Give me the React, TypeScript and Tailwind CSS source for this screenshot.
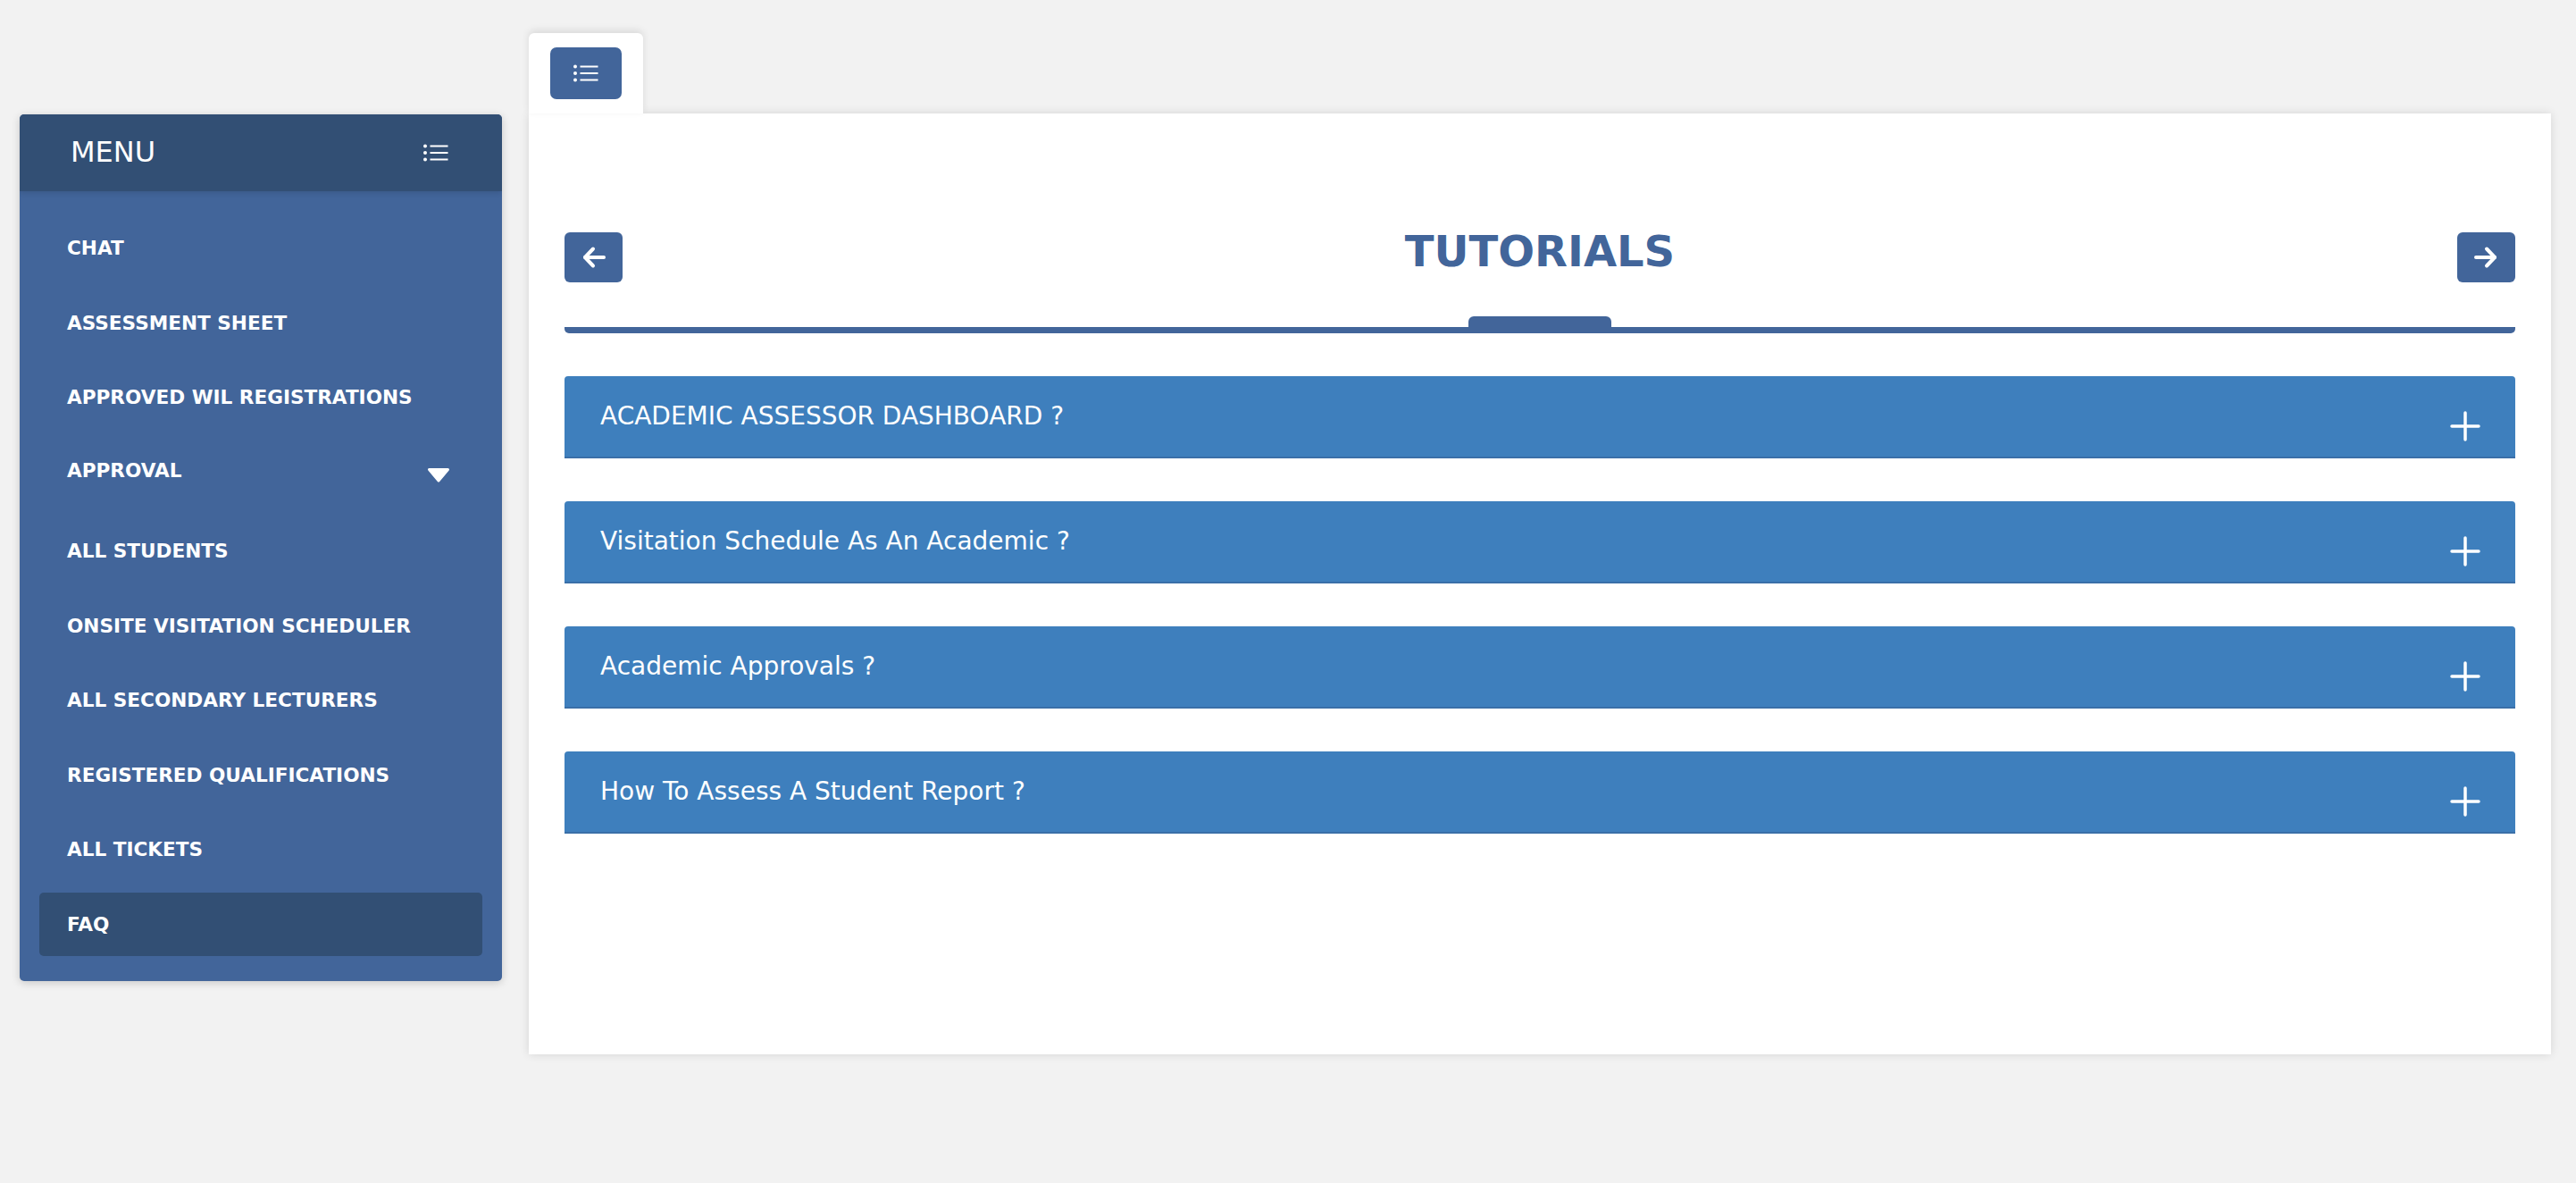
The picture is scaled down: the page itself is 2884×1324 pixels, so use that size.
import React from "react";

const ListIcon = ({ className = "" }: { className?: string }) => (
  <svg className={className} width="28" height="20" viewBox="0 0 28 20" fill="none">
    <circle cx="2" cy="2.5" r="2" fill="white" />
    <circle cx="2" cy="10" r="2" fill="white" />
    <circle cx="2" cy="17.5" r="2" fill="white" />
    <rect x="7.5" y="1.5" width="20" height="2" fill="white" />
    <rect x="7.5" y="9" width="20" height="2" fill="white" />
    <rect x="7.5" y="16.5" width="20" height="2" fill="white" />
  </svg>
);

const ArrowLeft = () => (
  <svg width="28" height="28" viewBox="0 0 28 28" fill="none" stroke="white" strokeWidth="4" strokeLinecap="round" strokeLinejoin="round">
    <line x1="4" y1="14" x2="25" y2="14" />
    <polyline points="13,4.5 4,14 13,23.5" />
  </svg>
);

const ArrowRight = () => (
  <svg width="28" height="28" viewBox="0 0 28 28" fill="none" stroke="white" strokeWidth="4" strokeLinecap="round" strokeLinejoin="round">
    <line x1="3" y1="14" x2="24" y2="14" />
    <polyline points="15,4.5 24,14 15,23.5" />
  </svg>
);

const Plus = () => (
  <svg width="34" height="34" viewBox="0 0 34 34" fill="none" stroke="white" strokeWidth="3.5" strokeLinecap="round">
    <line x1="17" y1="2" x2="17" y2="32" />
    <line x1="2" y1="17" x2="32" y2="17" />
  </svg>
);

const Caret = () => (
  <svg width="26" height="18" viewBox="0 0 26 18" fill="white" stroke="white" strokeWidth="3" strokeLinejoin="round">
    <polygon points="2.5,2.5 23.5,2.5 13,15" />
  </svg>
);

const menu = [
  "CHAT",
  "ASSESSMENT SHEET",
  "APPROVED WIL REGISTRATIONS",
  "APPROVAL",
  "ALL STUDENTS",
  "ONSITE VISITATION SCHEDULER",
  "ALL SECONDARY LECTURERS",
  "REGISTERED QUALIFICATIONS",
  "ALL TICKETS",
  "FAQ",
];

const faqs = [
  "ACADEMIC ASSESSOR DASHBOARD ?",
  "Visitation Schedule As An Academic ?",
  "Academic Approvals ?",
  "How To Assess A Student Report ?",
];

export default function App() {
  return (
    <div
      className="w-full h-[1324px] bg-[#f2f2f2] flex items-start overflow-hidden"
      style={{ fontFamily: "'DejaVu Sans', 'Liberation Sans', sans-serif" }}
    >
      {/* Sidebar */}
      <aside className="ml-[22px] mt-[128px] w-[540px] rounded-[5px] bg-[#42659a] shadow-[0_2px_10px_rgba(0,0,0,0.18)] overflow-hidden">
        <div className="h-[86px] bg-[#324f74] flex items-center justify-between pl-[57px] pr-[60px] shadow-[0_2px_6px_rgba(0,0,0,0.12)]">
          <span className="text-white text-[32px] leading-none mb-[2px]">MENU</span>
          <ListIcon />
        </div>
        <nav className="px-[22px] py-[28px] flex flex-col gap-[12.5px]">
          {menu.map((m) => {
            const active = m === "FAQ";
            const approval = m === "APPROVAL";
            return (
              <div
                key={m}
                className={`${approval ? "h-[76px]" : "h-[71px]"} ${
                  active ? "bg-[#324f74]" : ""
                } rounded-[5px] flex items-center justify-between pl-[31px] pr-[36px]`}
              >
                <span className={`text-white font-bold text-[21.6px] leading-none ${approval ? "mb-[7px]" : "mt-[1px]"}`}>{m}</span>
                {approval && (
                  <span className="mt-[2px]">
                    <Caret />
                  </span>
                )}
              </div>
            );
          })}
        </nav>
      </aside>

      {/* Main */}
      <div className="ml-[30px] mt-[37px] flex flex-col">
        <div className="relative z-10 w-[128px] h-[90px] bg-white rounded-t-[6px] pl-[24px] pt-[16px] shadow-[0_-3px_8px_rgba(0,0,0,0.1)]">
          <div className="w-[80px] h-[58px] rounded-[7px] bg-[#42659a] flex items-center justify-center">
            <ListIcon />
          </div>
        </div>
        <div className="w-[2264px] h-[1053px] bg-white shadow-[0_0_10px_rgba(0,0,0,0.12)] px-[40px] pt-[133px]">
          <div className="flex items-center justify-between h-[56px]">
            <button className="w-[65px] h-[56px] rounded-[6px] bg-[#42659a] flex items-center justify-center">
              <ArrowLeft />
            </button>
            <h1 className="text-[#42659a] font-bold text-[48px] leading-[56px] mb-[15px]">TUTORIALS</h1>
            <button className="w-[65px] h-[56px] rounded-[6px] bg-[#42659a] flex items-center justify-center">
              <ArrowRight />
            </button>
          </div>
          <div className="mt-[38px] flex justify-center">
            <div className="w-[160px] h-[12px] bg-[#42659a] rounded-t-[6px]" />
          </div>
          <div className="h-[7px] bg-[#42659a] rounded-b-[5px]" />

          <div className="mt-[48px] flex flex-col gap-[48px]">
            {faqs.map((f) => (
              <div
                key={f}
                className="h-[92px] bg-[#3e7fbd] border-b-2 border-[#3a6fa8] rounded-t-[4px] flex items-center justify-between pl-[40px] pr-[39px]"
              >
                <span className="text-white text-[28px] leading-none">{f}</span>
                <span className="mt-[22px]">
                  <Plus />
                </span>
              </div>
            ))}
          </div>
        </div>
      </div>
    </div>
  );
}
